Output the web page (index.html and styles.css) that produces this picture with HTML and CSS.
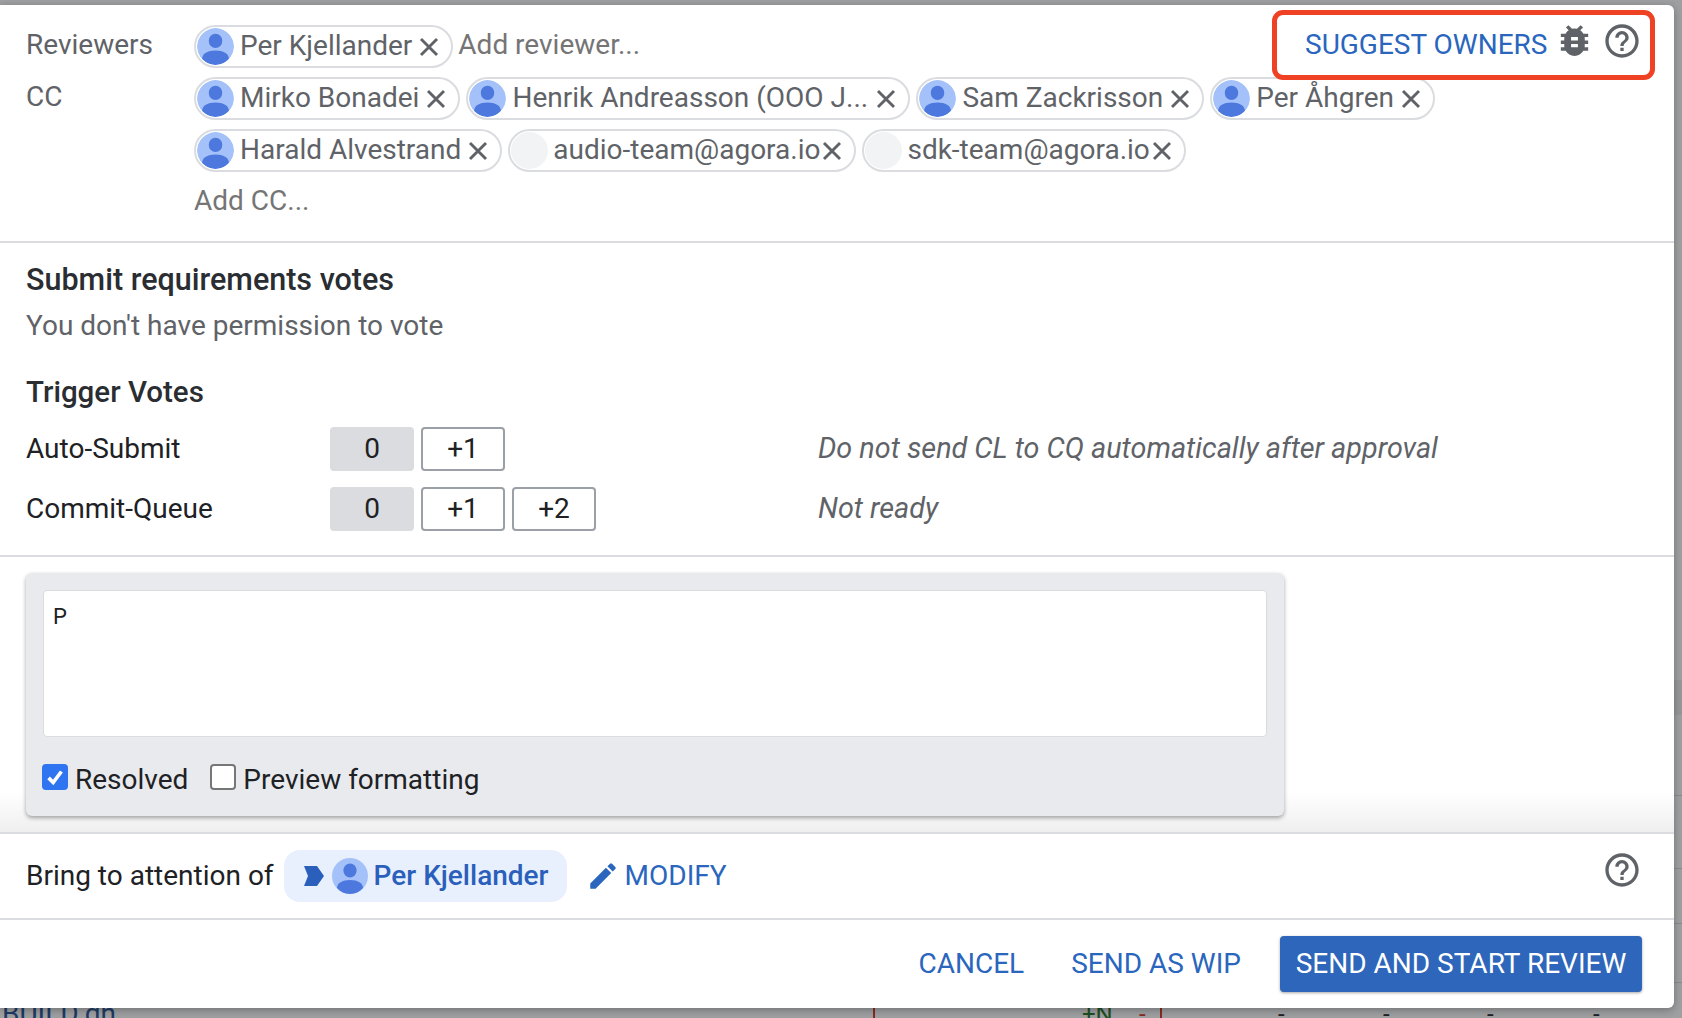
FILE: index.html
```html
<!DOCTYPE html>
<html lang="en">
<head>
<meta charset="utf-8">
<title>Reply dialog</title>
<link rel="stylesheet" href="styles.css">
</head>
<body>
<svg class="defs" width="0" height="0" aria-hidden="true">
  <symbol id="avatar" viewBox="0 0 36 36">
    <circle cx="18" cy="18" r="18" fill="#a4c2f9"/>
    <ellipse cx="18" cy="12.500" rx="6.600" ry="7" fill="#4d78de"/>
    <path d="M5 30c0-5 5.500-8 13-8s13 3 13 8c-3.300 3.800-8 6-13 6s-9.700-2.200-13-6z" fill="#4d78de"/>
  </symbol>
  <symbol id="x" viewBox="0 0 20 20">
    <path d="M2 2l16 16M18 2L2 18" stroke="#5f6368" stroke-width="2.900" fill="none"/>
  </symbol>
  <symbol id="help" viewBox="0 0 24 24">
    <path fill="#5f6368" d="M11 18h2v-2h-2v2zm1-16C6.480 2 2 6.480 2 12s4.480 10 10 10 10-4.480 10-10S17.520 2 12 2zm0 18c-4.410 0-8-3.590-8-8s3.590-8 8-8 8 3.590 8 8-3.590 8-8 8zm0-14c-2.210 0-4 1.790-4 4h2c0-1.100.9-2 2-2s2 .9 2 2c0 2-3 1.750-3 5h2c0-2.250 3-2.500 3-5 0-2.210-1.790-4-4-4z"/>
  </symbol>
</svg>

<div class="backdrop">
  <span class="bg-file">BUILD.gn</span>
  <span class="bg-rule bg-rule-a"></span>
  <span class="bg-added">+N</span>
  <span class="bg-removed">-</span>
  <span class="bg-rule bg-rule-b"></span>
  <span class="bg-dash bg-dash-1">-</span>
  <span class="bg-dash bg-dash-2">-</span>
  <span class="bg-dash bg-dash-3">-</span>
  <span class="bg-dash bg-dash-4">-</span>
  <span class="bg-band"></span>
  <span class="bg-line bg-line-1"></span>
  <span class="bg-line bg-line-2"></span>
  <span class="bg-line bg-line-3"></span>
  <span class="bg-line bg-line-4"></span>
</div>

<main class="dialog">
  <section class="people">
    <div class="owners">
      <a class="link owners-link">SUGGEST OWNERS</a>
      <svg class="bug" viewBox="0 0 24 24"><path fill="#5f6368" d="M20 8h-2.810a5.985 5.985 0 0 0-1.820-1.960L17 4.410 15.590 3l-2.170 2.170a6 6 0 0 0-2.830 0L8.410 3 7 4.410l1.620 1.630C7.810 6.600 7.150 7.240 6.810 8H4v2h2.090c-.05.330-.09.660-.09 1v1H4v2h2v1c0 .340.040.670.090 1H4v2h2.810c1.040 1.790 2.970 3 5.190 3s4.150-1.210 5.190-3H20v-2h-2.090c.05-.330.090-.660.090-1v-1h2v-2h-2v-1c0-.340-.040-.670-.090-1H20V8zm-6 8h-4v-2h4v2zm0-4h-4v-2h4v2z"/></svg>
      <svg class="help"><use href="#help"/></svg>
    </div>
    <div class="people-row">
      <div class="people-label">Reviewers</div>
      <div class="chips">
        <span class="chip"><svg class="avatar"><use href="#avatar"/></svg><span class="chip-name">Per Kjellander</span><svg class="chip-x"><use href="#x"/></svg></span>
        <span class="add-input add-reviewer">Add reviewer...</span>
      </div>
    </div>
    <div class="people-row">
      <div class="people-label">CC</div>
      <div class="chips">
        <span class="chip"><svg class="avatar"><use href="#avatar"/></svg><span class="chip-name">Mirko Bonadei</span><svg class="chip-x"><use href="#x"/></svg></span>
        <span class="chip"><svg class="avatar"><use href="#avatar"/></svg><span class="chip-name chip-clip">Henrik Andreasson (OOO J...</span><svg class="chip-x"><use href="#x"/></svg></span>
        <span class="chip"><svg class="avatar"><use href="#avatar"/></svg><span class="chip-name">Sam Zackrisson</span><svg class="chip-x"><use href="#x"/></svg></span>
        <span class="chip"><svg class="avatar"><use href="#avatar"/></svg><span class="chip-name">Per Åhgren</span><svg class="chip-x"><use href="#x"/></svg></span>
        <span class="chip"><svg class="avatar"><use href="#avatar"/></svg><span class="chip-name">Harald Alvestrand</span><svg class="chip-x"><use href="#x"/></svg></span>
        <span class="chip"><span class="avatar-empty"></span><span class="chip-name chip-name-tight">audio-team@agora.io</span><svg class="chip-x"><use href="#x"/></svg></span>
        <span class="chip"><span class="avatar-empty"></span><span class="chip-name chip-name-tight">sdk-team@agora.io</span><svg class="chip-x"><use href="#x"/></svg></span>
        <span class="add-input add-cc">Add CC...</span>
      </div>
    </div>
  </section>

  <section class="votes">
    <h2 class="votes-title">Submit requirements votes</h2>
    <p class="no-permission">You don't have permission to vote</p>
    <h2 class="votes-title trigger-title">Trigger Votes</h2>
    <div class="vote-row">
      <div class="vote-label">Auto-Submit</div>
      <div class="vote-buttons">
        <span class="vote vote-on">0</span>
        <span class="vote">+1</span>
      </div>
      <div class="vote-note">Do not send CL to CQ automatically after approval</div>
    </div>
    <div class="vote-row">
      <div class="vote-label">Commit-Queue</div>
      <div class="vote-buttons">
        <span class="vote vote-on">0</span>
        <span class="vote">+1</span>
        <span class="vote">+2</span>
      </div>
      <div class="vote-note">Not ready</div>
    </div>
  </section>

  <section class="comment-wrap">
    <div class="comment">
      <div class="comment-text">P</div>
      <div class="comment-options">
        <label class="option"><span class="check check-on"><svg viewBox="0 0 24 24"><path d="M5 13l5 5 9-12" fill="none" stroke="#fff" stroke-width="4"/></svg></span>Resolved</label>
        <label class="option"><span class="check"></span>Preview formatting</label>
      </div>
    </div>
  </section>

  <section class="attention">
    <span class="attention-label">Bring to attention of</span>
    <span class="attention-chip">
      <svg class="attention-arrow" viewBox="0 0 20 20"><path d="M0 0h13l7 10-7 10H0l4-10z" fill="#2a5fbb"/></svg>
      <svg class="attention-avatar"><use href="#avatar"/></svg>
      <span class="attention-name">Per Kjellander</span>
    </span>
    <a class="link modify"><svg class="pencil" viewBox="0 0 24 24"><path fill="#2a66bd" d="M3 17.250V21h3.750L17.810 9.940l-3.750-3.750L3 17.250zM20.710 7.040a1 1 0 0 0 0-1.410l-2.340-2.340a1 1 0 0 0-1.410 0l-1.830 1.830 3.750 3.750 1.830-1.830z"/></svg><span class="modify-text">MODIFY</span></a>
    <svg class="help attention-help"><use href="#help"/></svg>
  </section>

  <footer class="actions">
    <a class="link">CANCEL</a>
    <a class="link">SEND AS WIP</a>
    <a class="primary">SEND AND START REVIEW</a>
  </footer>
</main>

<div class="highlight"></div>
</body>
</html>
```

FILE: styles.css
```css
* { box-sizing: border-box; }
html, body { margin: 0; height: 100%; }
body {
  width: 1682px;
  height: 1018px;
  overflow: hidden;
  position: relative;
  background: #9fa0a2;
  font-family: Roboto, "Liberation Sans", sans-serif;
  font-size: 28px;
  color: #202124;
}
.defs { position: absolute; }

.backdrop { position: absolute; inset: 0; color: #1d3b66; }
.backdrop > span { position: absolute; }
.bg-file { left: 2px; top: 997px; font-size: 28px; }
.bg-rule { top: 1008px; width: 2px; height: 10px; background: #8a2a22; }
.bg-rule-a { left: 873px; }
.bg-rule-b { left: 1160px; }
.bg-added { left: 1082px; top: 1000px; color: #1d4f22; font-size: 24px; }
.bg-removed { left: 1139px; top: 1000px; color: #8a2a22; font-size: 24px; }
.bg-dash { top: 1000px; font-size: 24px; color: #202124; }
.bg-dash-1 { left: 1278px; }
.bg-dash-2 { left: 1383px; }
.bg-dash-3 { left: 1487px; }
.bg-dash-4 { left: 1593px; }
.bg-band { left: 1674px; top: 680px; width: 8px; height: 35px; background: #979899; }
.bg-line { left: 1674px; width: 8px; height: 1px; background: #8a8b8d; }
.bg-line-1 { top: 795px; }
.bg-line-2 { top: 868px; }
.bg-line-3 { top: 923px; }
.bg-line-4 { top: 982px; }

.dialog {
  position: absolute;
  left: 0;
  top: 5px;
  width: 1674px;
  height: 1003px;
  background: #fff;
  border-radius: 0 6px 6px 0;
  box-shadow: 0 2px 8px rgba(0, 0, 0, .3);
  display: flex;
  flex-direction: column;
}

.people {
  position: relative;
  height: 238px;
  border-bottom: 2px solid #dadce0;
  padding: 20px 0 0 26px;
  display: flex;
  flex-direction: column;
  gap: 9px;
}
.people-row { display: flex; align-items: flex-start; }
.people-label { width: 168px; flex: none; line-height: 40px; color: #5f6368; }
.chips { display: flex; flex-wrap: wrap; gap: 9px 6px; width: 1250px; align-items: flex-start; }
.chip {
  display: inline-flex;
  align-items: center;
  height: 43px;
  border: 2px solid #dadce0;
  border-radius: 22px;
  padding: 0 12px 0 1px;
  color: #5f6368;
  white-space: nowrap;
}
.avatar, .avatar-empty { width: 37px; height: 37px; flex: none; border-radius: 50%; }
.avatar-empty { background: #f1f3f4; }
.chip-name { margin: -2px 7px 0 6px; }
.chip-name-tight { margin-left: 5px; margin-right: 2px; }
.chip-clip { width: 357px; overflow: hidden; }
.chip-x { width: 20px; height: 20px; flex: none; }
.add-input { color: #757575; }
.add-reviewer { line-height: 40px; margin-left: -1px; }
.add-cc { flex-basis: 100%; line-height: 39px; }

.owners { position: absolute; top: 15px; left: 1305px; display: flex; align-items: center; }
.owners-link { line-height: 33px; padding-top: 8px; margin-right: 7px; }
.bug { width: 41px; height: 41px; margin-right: 7px; }
.help { width: 40px; height: 40px; }

.link { color: #2a66bd; }

.votes {
  height: 314px;
  border-bottom: 2px solid #dadce0;
  padding: 17px 0 0 26px;
}
.votes-title { margin: 0; font-size: 30.500px; font-weight: 500; line-height: 40px; color: #2a2d31; }
.no-permission { margin: 6px 0 0; line-height: 40px; color: #5f6368; }
.trigger-title { margin-top: 26px; font-size: 29.500px; }
.vote-row { display: flex; align-items: center; height: 44px; margin-top: 16px; }
.trigger-title + .vote-row { margin-top: 15px; }
.vote-label { width: 304px; flex: none; padding-bottom: 2px; }
.vote-buttons { width: 488px; flex: none; display: flex; gap: 7px; }
.vote {
  width: 84px;
  height: 44px;
  display: flex;
  align-items: center;
  justify-content: center;
  border: 2px solid #9aa0a6;
  border-radius: 4px;
  padding-bottom: 2px;
}
.vote-on { background: #dadce0; border-color: #dadce0; }
.vote-note { font-style: italic; font-size: 28.800px; color: #5f6368; padding-bottom: 2px; }

.comment-wrap {
  height: 275px;
  padding: 16px 0 0 26px;
  background: linear-gradient(#fff calc(100% - 40px), #efefef);
}
.comment {
  width: 1258px;
  height: 243px;
  background: #e8eaed;
  border-radius: 6px;
  box-shadow: 0 2px 4px rgba(0, 0, 0, .35);
  padding: 17px 17px 0;
}
.comment-text {
  height: 147px;
  background: #fff;
  border: 1px solid #dadce0;
  border-radius: 4px;
  padding: 13px 9px;
  font-size: 22px;
  line-height: 26px;
}
.comment-options { display: flex; gap: 22px; margin-top: 23px; margin-left: -1px; }
.option { display: flex; align-items: center; gap: 7px; line-height: 40px; }
.check {
  width: 26px;
  height: 26px;
  background: #fff;
  border: 2px solid #767676;
  border-radius: 4px;
  margin-top: -6px;
}
.check-on { background: #2f74f0; border-color: #2f74f0; }
.check svg { display: block; width: 100%; height: 100%; }

.attention {
  height: 88px;
  flex: none;
  border-top: 2px solid #dadce0;
  border-bottom: 2px solid #dadce0;
  display: flex;
  align-items: center;
  padding: 0 0 0 26px;
}
.attention-label { padding-bottom: 2px; }
.attention-chip {
  display: inline-flex;
  align-items: center;
  height: 52px;
  width: 283px;
  background: #e8f0fe;
  border-radius: 16px;
  margin-left: 10px;
  padding-left: 20px;
  color: #2a5fbb;
  font-weight: 500;
}
.attention-arrow { width: 20px; height: 20px; flex: none; }
.attention-avatar { width: 36px; height: 36px; margin-left: 8px; flex: none; }
.attention-name { margin-left: 6px; padding-bottom: 2px; }
.modify { display: inline-flex; align-items: center; margin-left: 19px; }
.pencil { width: 34px; height: 34px; margin-right: 5px; }
.modify-text { padding-bottom: 2px; }
.attention-help { margin-left: auto; margin-right: 32px; margin-top: -12px; }

.actions {
  flex: 1;
  display: flex;
  justify-content: flex-end;
  align-items: flex-start;
  gap: 47px;
  padding: 16px 32px 0 0;
}
.actions .link { line-height: 56px; }
.primary {
  width: 362px;
  height: 56px;
  line-height: 56px;
  text-align: center;
  background: #2d66ba;
  color: #fff;
  border-radius: 4px;
  margin-left: -8px;
  box-shadow: 0 1px 3px rgba(0, 0, 0, .35);
}

.highlight {
  position: absolute;
  left: 1272px;
  top: 10px;
  width: 383px;
  height: 70px;
  border: 5px solid #ef4123;
  border-radius: 11px;
}
```
